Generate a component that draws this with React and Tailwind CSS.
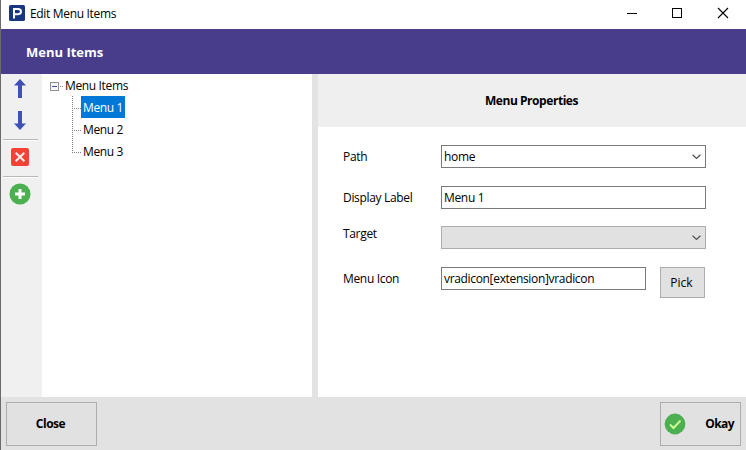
import React from 'react';

const menus = ['Menu 1', 'Menu 2', 'Menu 3'];

function Arrow({ down }) {
  return (
    <svg width="14" height="19" viewBox="0 0 14 19" className={down ? 'rotate-180' : ''} fill="#3f51b5">
      <path d="M7 0L13 6.5H1Z" />
      <path d="M5 5.5H9V19H5Z" />
    </svg>
  );
}

function Separator() {
  return <div className="h-[2px] w-[35px] shrink-0 border-b border-white bg-[#b8b8b8]" />;
}

function Toolbar() {
  return (
    <aside className="flex w-[41px] shrink-0 flex-col items-center bg-[#f0f0f0] pr-[3px] pt-[5px]">
      <Arrow />
      <div className="h-[13px]" />
      <Arrow down />
      <div className="h-[9px]" />
      <Separator />
      <svg width="18" height="18" viewBox="0 0 18 18" className="mt-[7px]">
        <rect width="18" height="18" rx="2" fill="#f44336" />
        <path d="M4.7 4.7L13.3 13.3M13.3 4.7L4.7 13.3" stroke="#ffebee" strokeWidth="2.1" />
      </svg>
      <div className="h-[10px]" />
      <Separator />
      <svg width="22" height="22" viewBox="0 0 22 22" className="mt-[5px]">
        <circle cx="11" cy="11" r="10.5" fill="#4caf50" />
        <path d="M11 6V16M6 11H16" stroke="#fff" strokeWidth="3" />
      </svg>
    </aside>
  );
}

function Tree() {
  return (
    <section className="w-[270px] shrink-0 bg-white tracking-[-0.35px]">
      <div className="flex h-[22px] pl-2">
        <svg width="14" height="22" viewBox="0 0 14 22" shapeRendering="crispEdges">
          <rect x="0.5" y="8.5" width="8" height="8" fill="#f5f5f5" stroke="#919191" />
          <path d="M2 12.5H7" stroke="#3450a4" />
          <path d="M10 12.5H14" stroke="#808080" strokeDasharray="1 1" />
        </svg>
        <span className="pl-px leading-6">Menu Items</span>
      </div>
      {menus.map((label, i) => (
        <div key={label} className="flex h-[22px] pl-[30px]">
          <svg width="9" height="22" viewBox="0 0 9 22" shapeRendering="crispEdges">
            <path d={i === 2 ? 'M0.5 0V13' : 'M0.5 0V22'} stroke="#808080" strokeDasharray="1 1" />
            <path d="M2 12.5H9" stroke="#808080" strokeDasharray="1 1" />
          </svg>
          <span className={`w-[44px] pl-[2px] leading-6 ${i === 0 ? 'bg-[#0078d7] text-white' : ''}`}>{label}</span>
        </div>
      ))}
    </section>
  );
}

function Chevron() {
  return (
    <svg width="9" height="6" viewBox="0 0 9 6" className="mr-1" fill="none">
      <path d="M0.6 0.8L4.5 4.5L8.4 0.8" stroke="#505050" strokeWidth="1.2" />
    </svg>
  );
}

function Field({ label, value, select, disabled, width = 'w-[265px]', labelShift = 'pt-[3px]', children }) {
  return (
    <div className="flex items-start">
      <span className={`w-[98px] leading-[18px] ${labelShift}`}>{label}</span>
      <div className={`flex h-[23px] items-center justify-between border pl-[2px] ${width} ${disabled ? 'border-[#adadad] bg-[#e1e1e1]' : 'border-[#7a7a7a] bg-white'}`}>
        <span className="leading-[21px]">{value}</span>
        {select && <Chevron />}
      </div>
      {children}
    </div>
  );
}

function Properties() {
  return (
    <section className="min-w-0 flex-1 bg-white">
      <h2 className="flex h-[53px] items-center justify-center bg-[#efefef] pr-px text-[12px] font-bold tracking-[-0.45px]">Menu Properties</h2>
      <div className="flex flex-col pl-[25px] pt-[18px] tracking-[-0.33px]">
        <Field label="Path" value="home" select />
        <div className="h-[18px]" />
        <Field label="Display Label" value="Menu 1" />
        <div className="h-[17px]" />
        <Field label="Target" value="" select disabled labelShift="-mt-px" />
        <div className="h-[18px]" />
        <Field label="Menu Icon" value="vradicon[extension]vradicon" width="w-[205px]">
          <button className="ml-[14px] h-[31px] w-[45px] border border-[#adadad] bg-[#e1e1e1] pr-[2px] tracking-normal">Pick</button>
        </Field>
      </div>
    </section>
  );
}

export default function App() {
  return (
    <div className="flex h-[450px] w-[746px] flex-col overflow-hidden border-l border-[#6b6b6b] bg-white font-['Open_Sans','Noto_Sans',sans-serif] text-[12px] text-black">
      <header className="flex h-[29px] shrink-0 items-center pl-2">
        <svg width="16" height="16" viewBox="0 0 16 16" className="-mt-[3px]">
          <rect width="16" height="16" rx="1.5" fill="#183781" />
          <path d="M5 13.5V4H9Q12 4 12 6.5T9 9.2H5" fill="none" stroke="#fff" strokeWidth="2" />
        </svg>
        <span className="-mt-[2px] ml-[5px] tracking-[-0.33px]">Edit Menu Items</span>
        <svg width="102" height="12" viewBox="0 0 102 12" className="-mt-[3px] ml-auto mr-[17px]" fill="none" stroke="#000">
          <path d="M0 6.5H10" />
          <rect x="45.5" y="1.5" width="9" height="9" />
          <path d="M91 1L101 11M101 1L91 11" strokeWidth="1.1" />
        </svg>
      </header>
      <h1 className="flex h-[45px] shrink-0 items-center bg-[#483d8b] pl-[25px] pt-[2px] text-[13px] font-bold text-white">Menu Items</h1>
      <main className="flex h-[323px] shrink-0">
        <Toolbar />
        <Tree />
        <div className="w-[6px] shrink-0 bg-[#e3e3e3]" />
        <Properties />
      </main>
      <footer className="flex h-[53px] shrink-0 items-start justify-between bg-[#e2e2e2] pl-[5px] pr-[5px] pt-[5px] font-bold tracking-[-0.45px]">
        <button className="h-[44px] w-[91px] border border-[#adadad] bg-[#e1e1e1] pr-[2px]">Close</button>
        <button className="flex h-[44px] w-[81px] items-center justify-between border border-[#adadad] bg-[#e1e1e1] pl-[3px] pr-[6px]">
          <svg width="22" height="22" viewBox="0 0 22 22">
            <circle cx="11" cy="11" r="10.4" fill="#4caf50" />
            <path d="M6 11.5L9.5 15L16.5 7.5" fill="none" stroke="#ccff90" strokeWidth="2" />
          </svg>
          <span className="tracking-[-0.6px]">Okay</span>
        </button>
      </footer>
    </div>
  );
}
